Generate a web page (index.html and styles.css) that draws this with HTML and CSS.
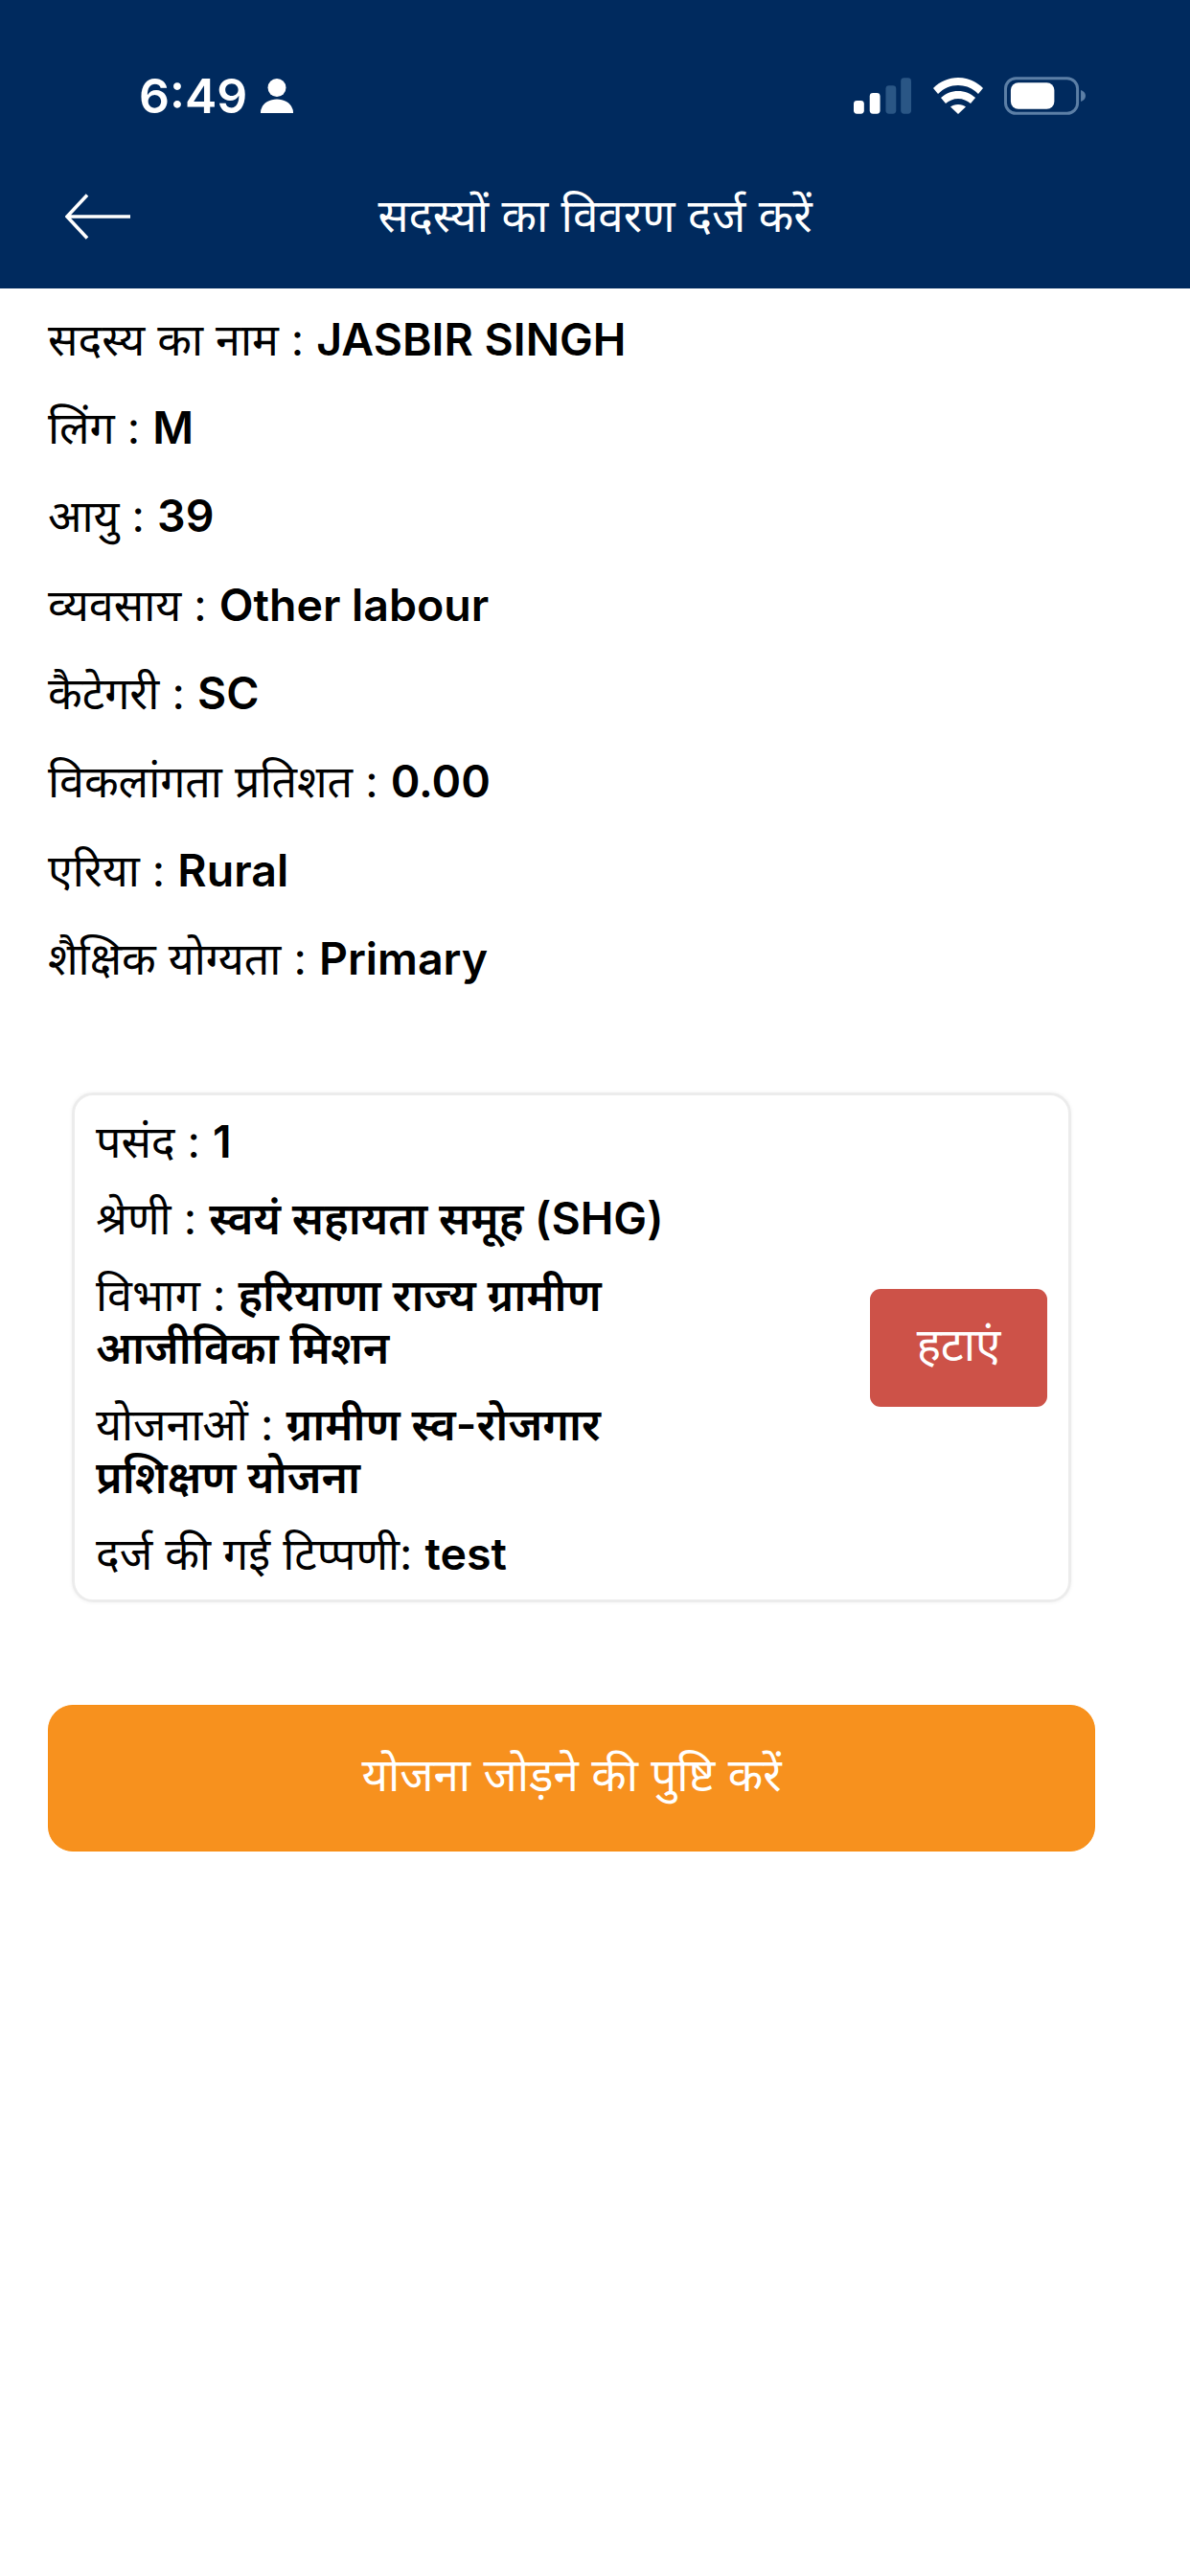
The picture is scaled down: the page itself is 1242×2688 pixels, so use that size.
FILE: index.html
```html
<!DOCTYPE html>
<html lang="hi">
<head>
<meta charset="utf-8">
<title>सदस्यों का विवरण दर्ज करें</title>
<link rel="stylesheet" href="styles.css">
</head>
<body>
<header class="top">
  <div class="status">
    <div class="status-left">
      <span class="time">6:49</span>
      <svg class="person" viewBox="0 0 34 36" aria-hidden="true"><circle cx="17" cy="9.500" r="9.500"/><path d="M0 36c0-2 0-3 1-5 2-6 9-9.500 16-9.500s14 3.500 16 9.500c1 2 1 3 1 5z"/></svg>
    </div>
    <div class="status-right">
      <svg class="signal" viewBox="0 0 62 38" aria-hidden="true">
        <rect x="0" y="24" width="11" height="14" rx="3.500" fill="#fff"/>
        <rect x="17" y="16" width="11" height="22" rx="3.500" fill="#fff"/>
        <rect x="34" y="8" width="11" height="30" rx="3.500" fill="#2a5685"/>
        <rect x="50" y="0" width="11" height="38" rx="3.500" fill="#2a5685"/>
      </svg>
      <svg class="wifi" viewBox="0 0 52 38" aria-hidden="true">
        <path d="M26 0C16 0 7 4 0 11l5 6C11 11 18 8 26 8s15 3 21 9l5-6C45 4 36 0 26 0z"/>
        <path d="M26 14c-7 0-13 2.500-18 7l5 6c3.500-3 8-5 13-5s9.500 2 13 5l5-6c-5-4.500-11-7-18-7z"/>
        <path d="M26 28c-3.500 0-6 1-8 2.500L26 38l8-7.500C32 29 29.500 28 26 28z"/>
      </svg>
      <svg class="battery" viewBox="0 0 86 40" aria-hidden="true">
        <rect x="1.500" y="1.500" width="76" height="37" rx="11" fill="none" stroke="#5c7fa6" stroke-width="3"/>
        <rect x="7" y="6" width="46" height="28" rx="8" fill="#fff"/>
        <path d="M81 14c3 1 5 3 5 6s-2 5-5 6z" fill="#5c7fa6"/>
      </svg>
    </div>
  </div>
  <div class="nav">
    <svg class="back" viewBox="0 0 68 48" aria-hidden="true"><path d="M23 1.500L2 24l21 22.500M2 24h66"/></svg>
    <h1 class="nav-title">सदस्यों का विवरण दर्ज करें</h1>
  </div>
</header>
<main class="page">
  <section class="details">
    <p class="row">सदस्य का नाम : <b>JASBIR SINGH</b></p>
    <p class="row">लिंग : <b>M</b></p>
    <p class="row">आयु : <b>39</b></p>
    <p class="row">व्यवसाय : <b>Other labour</b></p>
    <p class="row">कैटेगरी : <b>SC</b></p>
    <p class="row">विकलांगता प्रतिशत : <b>0.00</b></p>
    <p class="row">एरिया : <b>Rural</b></p>
    <p class="row">शैक्षिक योग्यता : <b>Primary</b></p>
  </section>
  <section class="card">
    <div class="card-text">
      <p class="card-row">पसंद : <b>1</b></p>
      <p class="card-row">श्रेणी : <b>स्वयं सहायता समूह (SHG)</b></p>
      <p class="card-row">विभाग : <b>हरियाणा राज्य ग्रामीण आजीविका मिशन</b></p>
      <p class="card-row">योजनाओं : <b>ग्रामीण स्व-रोजगार प्रशिक्षण योजना</b></p>
      <p class="card-row">दर्ज की गई टिप्पणी: <b>test</b></p>
    </div>
    <button class="remove" type="button">हटाएं</button>
  </section>
  <button class="confirm" type="button">योजना जोड़ने की पुष्टि करें</button>
</main>
</body>
</html>
```
FILE: styles.css
```css
* { box-sizing: border-box; }
html, body { margin: 0; padding: 0; background: #fff; }
body {
  width: 1242px;
  min-height: 2688px;
  font-family: "Inter", "Noto Sans Devanagari", "Lohit Devanagari", "Noto Sans", sans-serif;
  color: #000;
}
p, h1 { margin: 0; }
.top { background: #002a5e; height: 301px; color: #fff; }
.status {
  height: 180px;
  padding: 80px 109px 0 145px;
  display: flex;
  justify-content: space-between;
  align-items: flex-start;
}
.status-left { display: flex; align-items: center; gap: 14px; height: 40px; }
.time { font-size: 50px; font-weight: 600; line-height: 40px; }
.person { width: 34px; height: 36px; fill: #fff; }
.status-right { display: flex; align-items: center; gap: 22px; height: 40px; }
.signal { width: 61px; height: 38px; }
.wifi { width: 52px; height: 38px; fill: #fff; }
.battery { width: 85px; height: 40px; }
.nav { position: relative; display: flex; align-items: center; justify-content: center; height: 90px; }
.back { position: absolute; left: 68px; top: 22px; width: 68px; height: 48px; fill: none; stroke: #fff; stroke-width: 3.5; }
.nav-title { font-size: 47.500px; font-weight: 400; line-height: 90px; }
.page { padding: 6.500px 100px 0 50px; }
.row { font-size: 46.500px; font-weight: 400; line-height: 92.400px; height: 92.400px; white-space: nowrap; }
.row b, .card-row b { font-weight: 600; }
.card {
  margin: 93.500px 0 0 25px;
  width: 1043px;
  height: 532px;
  border: 3px solid #ececec;
  border-radius: 22px;
  box-shadow: 0 0 4px rgba(0, 0, 0, 0.06);
  padding: 0 22px 0 22px;
  display: flex;
  align-items: center;
  justify-content: space-between;
}
.card-text { width: 620px; display: flex; flex-direction: column; gap: 25px; }
.card-row { font-size: 46.500px; line-height: 55px; }
.remove {
  width: 185px;
  height: 123px;
  border: 0;
  border-radius: 11px;
  background: #cd5248;
  color: #fff;
  font: inherit;
  font-size: 47.500px;
}
.confirm {
  display: block;
  margin-top: 107px;
  width: 1093px;
  height: 153px;
  border: 1px solid #f98d10;
  border-radius: 26px;
  background: #f7911e;
  color: #fff;
  font: inherit;
  font-size: 47.500px;
}
```
